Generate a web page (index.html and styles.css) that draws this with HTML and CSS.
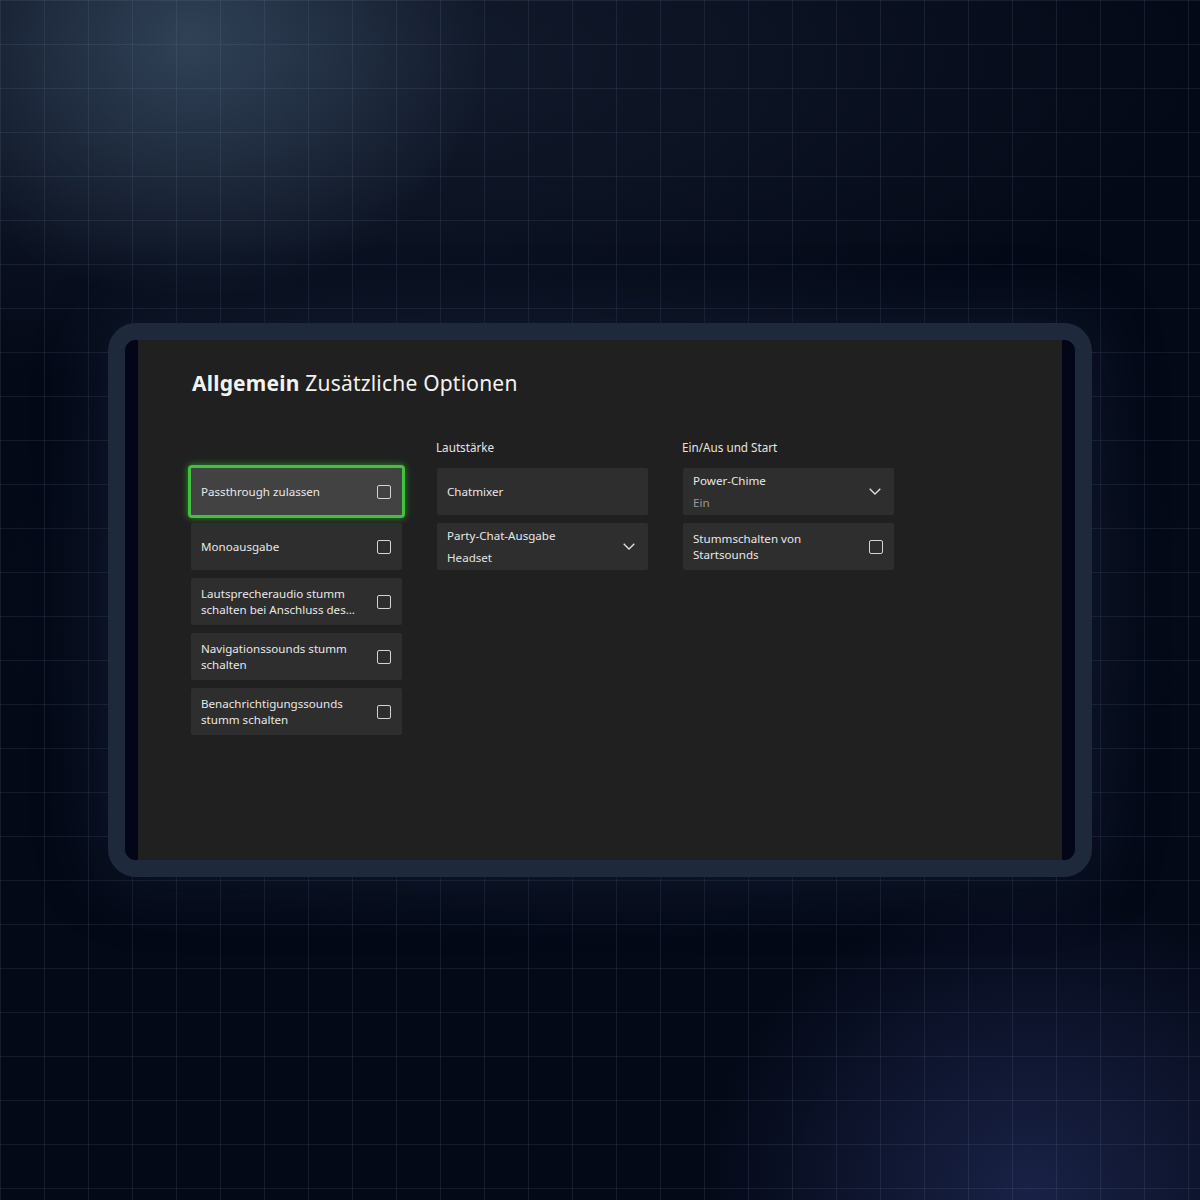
FILE: index.html
```html
<!DOCTYPE html>
<html lang="de">
<head>
    <meta charset="UTF-8">
    <meta name="viewport" content="width=device-width, initial-scale=1.0">
    <title>Allgemein Zusätzliche Optionen</title>
    <link rel="stylesheet" href="styles.css">
</head>
<body>
    <div class="stage">
        <div class="device">
            <div class="screen">
                <div class="settings">
                    <h1><b>Allgemein</b> Zusätzliche Optionen</h1>

                    <div class="columns">
                        <div class="column">
                            <div class="col-title"></div>
                            <div class="card focused">
                                <span class="label">Passthrough zulassen</span>
                                <span class="checkbox"></span>
                            </div>
                            <div class="card">
                                <span class="label">Monoausgabe</span>
                                <span class="checkbox"></span>
                            </div>
                            <div class="card">
                                <span class="label">Lautsprecheraudio stumm schalten bei Anschluss des…</span>
                                <span class="checkbox"></span>
                            </div>
                            <div class="card">
                                <span class="label">Navigationssounds stumm schalten</span>
                                <span class="checkbox"></span>
                            </div>
                            <div class="card">
                                <span class="label">Benachrichtigungssounds stumm schalten</span>
                                <span class="checkbox"></span>
                            </div>
                        </div>

                        <div class="column">
                            <div class="col-title">Lautstärke</div>
                            <div class="card">
                                <span class="label">Chatmixer</span>
                            </div>
                            <div class="card">
                                <span class="label two-line">Party-Chat-Ausgabe<small class="value">Headset</small></span>
                                <svg class="chevron" viewBox="0 0 12 7"><path d="M0.7 0.7 L6 6 L11.3 0.7" /></svg>
                            </div>
                        </div>

                        <div class="column">
                            <div class="col-title">Ein/Aus und Start</div>
                            <div class="card">
                                <span class="label two-line">Power-Chime<small class="value dim">Ein</small></span>
                                <svg class="chevron" viewBox="0 0 12 7"><path d="M0.7 0.7 L6 6 L11.3 0.7" /></svg>
                            </div>
                            <div class="card">
                                <span class="label">Stummschalten von Startsounds</span>
                                <span class="checkbox"></span>
                            </div>
                        </div>
                    </div>
                </div>
            </div>
        </div>
    </div>
</body>
</html>
```

FILE: styles.css
```css
html, body {
    margin: 0;
    padding: 0;
}

body {
    width: 1200px;
    height: 1200px;
    font-family: 'Noto Sans', 'Open Sans', sans-serif;
    background-color: #040917;
    background-image:
        linear-gradient(to right, rgba(120, 140, 170, 0.14) 1px, transparent 1px),
        linear-gradient(to bottom, rgba(120, 140, 170, 0.14) 1px, transparent 1px),
        radial-gradient(ellipse 300px 260px at 190px 40px, rgba(58, 78, 100, 0.75), transparent),
        radial-gradient(ellipse 900px 330px at 300px 60px, rgba(30, 42, 62, 0.6), transparent),
        radial-gradient(ellipse 330px 300px at 1030px 1190px, rgba(34, 44, 90, 0.7), transparent),
        radial-gradient(ellipse 620px 360px at 600px 600px, rgba(20, 30, 48, 0.5), transparent);
    background-size: 44px 44px, 44px 44px, 100% 100%, 100% 100%, 100% 100%, 100% 100%;
    overflow: hidden;
}

.stage {
    height: 100%;
    display: flex;
    align-items: center;
    justify-content: center;
}

.device {
    width: 950px;
    height: 520px;
    border: 17px solid #1e293b;
    border-radius: 28px;
    background: #020617;
    box-shadow: 0 0 70px rgba(40, 56, 84, 0.35);
}

.screen {
    height: 100%;
    padding: 0 13px;
    border-radius: 12px;
    background: #020617;
    overflow: hidden;
}

.settings {
    height: 100%;
    background: #202020;
    padding: 28px 0 0 53px;
    box-sizing: border-box;
    color: #f2f2f2;
}

h1 {
    margin: 0 0 0 1px;
    font-size: 21px;
    font-weight: 400;
    letter-spacing: 0.2px;
    line-height: 30px;
}

h1 b {
    font-weight: 700;
}

.columns {
    display: flex;
    gap: 35px;
    margin-top: 43px;
}

.column {
    width: 211px;
    display: flex;
    flex-direction: column;
    gap: 8px;
}

.col-title {
    height: 20px;
    font-size: 11.7px;
    line-height: 20px;
    color: #e4e4e4;
    margin: -4px 0 3px -1px;
}

.card {
    height: 47px;
    box-sizing: border-box;
    background: #2e2e2e;
    border-radius: 2px;
    padding: 0 11px 0 10px;
    display: flex;
    align-items: center;
    justify-content: space-between;
    font-size: 11.6px;
    color: #e8e8e8;
}

.card.focused {
    margin: -3px;
    height: 53px;
    padding: 0 11px 0 10px;
    background: #424242;
    border: 3px solid #3ec43b;
    border-radius: 4px;
    box-shadow: 0 0 7px rgba(60, 220, 60, 0.6);
}

.label {
    line-height: 16px;
    max-width: 165px;
}

.label.two-line {
    line-height: 22px;
    display: flex;
    flex-direction: column;
}

.value {
    font-size: 11.6px;
    color: #e2e2e2;
}

.value.dim {
    color: #9a9a9a;
}

.checkbox {
    width: 12px;
    height: 12px;
    border: 1.5px solid #d4d4d4;
    border-radius: 2px;
    flex-shrink: 0;
}

.chevron {
    width: 12px;
    height: 7px;
    margin-right: 2px;
    fill: none;
    stroke: #e0e0e0;
    stroke-width: 1.3;
}
```
